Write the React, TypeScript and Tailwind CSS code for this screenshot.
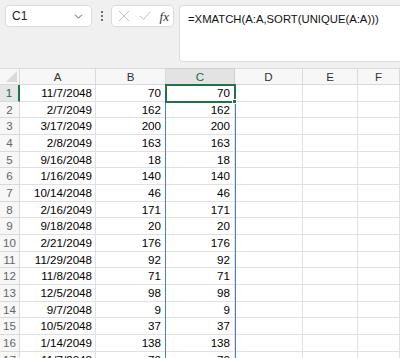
import { ChevronDown } from 'lucide-react';

const rows: [string, number][] = [
  ['11/7/2048', 70],
  ['2/7/2049', 162],
  ['3/17/2049', 200],
  ['2/8/2049', 163],
  ['9/16/2048', 18],
  ['1/16/2049', 140],
  ['10/14/2048', 46],
  ['2/16/2049', 171],
  ['9/18/2048', 20],
  ['2/21/2049', 176],
  ['11/29/2048', 92],
  ['11/8/2048', 71],
  ['12/5/2048', 98],
  ['9/7/2048', 9],
  ['10/5/2048', 37],
  ['1/14/2049', 138],
  ['11/7/2048', 70],
];

const cols = ['A', 'B', 'C', 'D', 'E', 'F'];
const font = { fontFamily: "'Liberation Sans', Arial, sans-serif" };

export default function App() {
  return (
    <div className="w-[400px] h-[358px] overflow-hidden bg-white text-[11.6px] text-black" style={font}>
      {/* Formula bar */}
      <div className="h-[68px] bg-[#f0f0f0] flex items-start pt-[5px] pl-[5px]">
        <div className="w-[87px] h-[22px] bg-white border border-[#dcdcdc] rounded-[4px] flex items-center justify-between pl-[6px] pr-[6px]">
          <span className="text-[12px] text-[#222]">C1</span>
          <ChevronDown size={13} strokeWidth={1.6} className="text-[#444]" />
        </div>
        <div className="w-[19px] h-[22px] flex flex-col items-center justify-center gap-[2px]">
          <div className="w-[2px] h-[2px] bg-[#444] rounded-full" />
          <div className="w-[2px] h-[2px] bg-[#444] rounded-full" />
          <div className="w-[2px] h-[2px] bg-[#444] rounded-full" />
        </div>
        <div className="w-[63px] h-[22px] bg-white border border-[#dcdcdc] rounded-[4px] flex items-center pl-[5px] pr-[4px] justify-between">
          <svg width="12" height="12" viewBox="0 0 12 12" className="ml-[1px]">
            <path d="M1 1 L11 11 M11 1 L1 11" stroke="#c4c4c4" strokeWidth="1" fill="none" />
          </svg>
          <svg width="12" height="10" viewBox="0 0 12 10">
            <path d="M1 5 L4.5 8.5 L11 1" stroke="#c4c4c4" strokeWidth="1" fill="none" />
          </svg>
          <span className="italic text-[13px] text-[#333] leading-none" style={{ fontFamily: "'Liberation Serif', 'Times New Roman', serif" }}>
            fx
          </span>
        </div>
        <div className="ml-[5px] flex-1 h-[57px] bg-white border border-[#dcdcdc] rounded-l-[4px] border-r-0 pl-[8px] pt-[4px]">
          <span className="text-[11.3px] text-[#111]">=XMATCH(A:A,SORT(UNIQUE(A:A)))</span>
        </div>
      </div>

      {/* Grid */}
      <div className="relative">
        <div className="grid grid-cols-[20px_76px_70px_69px_68px_55px_1fr]">
          <div className="relative h-[17px] bg-[#f7f7f7] border-r border-b border-[#dadada] border-t">
            <div className="absolute right-[2px] bottom-[2px] w-0 h-0 border-l-[11px] border-l-transparent border-b-[11px] border-b-[#dadada]" />
          </div>
          {cols.map((c) => (
            <div
              key={c}
              className={
                c === 'C'
                  ? 'h-[17px] bg-[#e3e3e3] border-r border-b border-t border-[#d0d0d0] flex items-center justify-center text-[#1e6b42]'
                  : 'h-[17px] bg-[#f7f7f7] border-r border-b border-t border-[#dadada] flex items-center justify-center text-[#333]'
              }
            >
              {c}
            </div>
          ))}
          {rows.map(([d, n], i) => (
            <div key={i} className="contents">
              <div
                className={
                  i === 0
                    ? 'h-[16.67px] bg-[#e6e6e6] border-r-2 border-r-[#217346] border-b border-b-[#dadada] flex items-center justify-center text-[#1e6b42] leading-none'
                    : 'h-[16.67px] bg-[#f7f7f7] border-r border-b border-[#dadada] flex items-center justify-center text-[#666] leading-none'
                }
              >
                {i + 1}
              </div>
              <div className="h-[16.67px] border-r border-b border-[#e1e1e1] flex items-center justify-end pr-[3px] leading-none">
                {d}
              </div>
              <div className="h-[16.67px] border-r border-b border-[#e1e1e1] flex items-center justify-end pr-[4px] leading-none">
                {n}
              </div>
              <div className="h-[16.67px] border-r border-b border-[#e1e1e1] flex items-center justify-end pr-[4px] leading-none">
                {n}
              </div>
              <div className="h-[16.67px] border-r border-b border-[#e1e1e1]" />
              <div className="h-[16.67px] border-r border-b border-[#e1e1e1]" />
              <div className="h-[16.67px] border-r border-b border-[#e1e1e1]" />
            </div>
          ))}
        </div>

        {/* Spill range border */}
        <div className="absolute left-[165px] top-[17px] w-[71px] h-[300px] border-x border-[#4a7fd8] pointer-events-none" />
        {/* Active cell */}
        <div className="absolute left-[165px] top-[16px] w-[71px] h-[18.5px] border-2 border-[#217346] pointer-events-none" />
        <div className="absolute left-[232px] top-[31px] w-[5px] h-[5px] bg-[#217346] border border-white pointer-events-none" />
      </div>
    </div>
  );
}
